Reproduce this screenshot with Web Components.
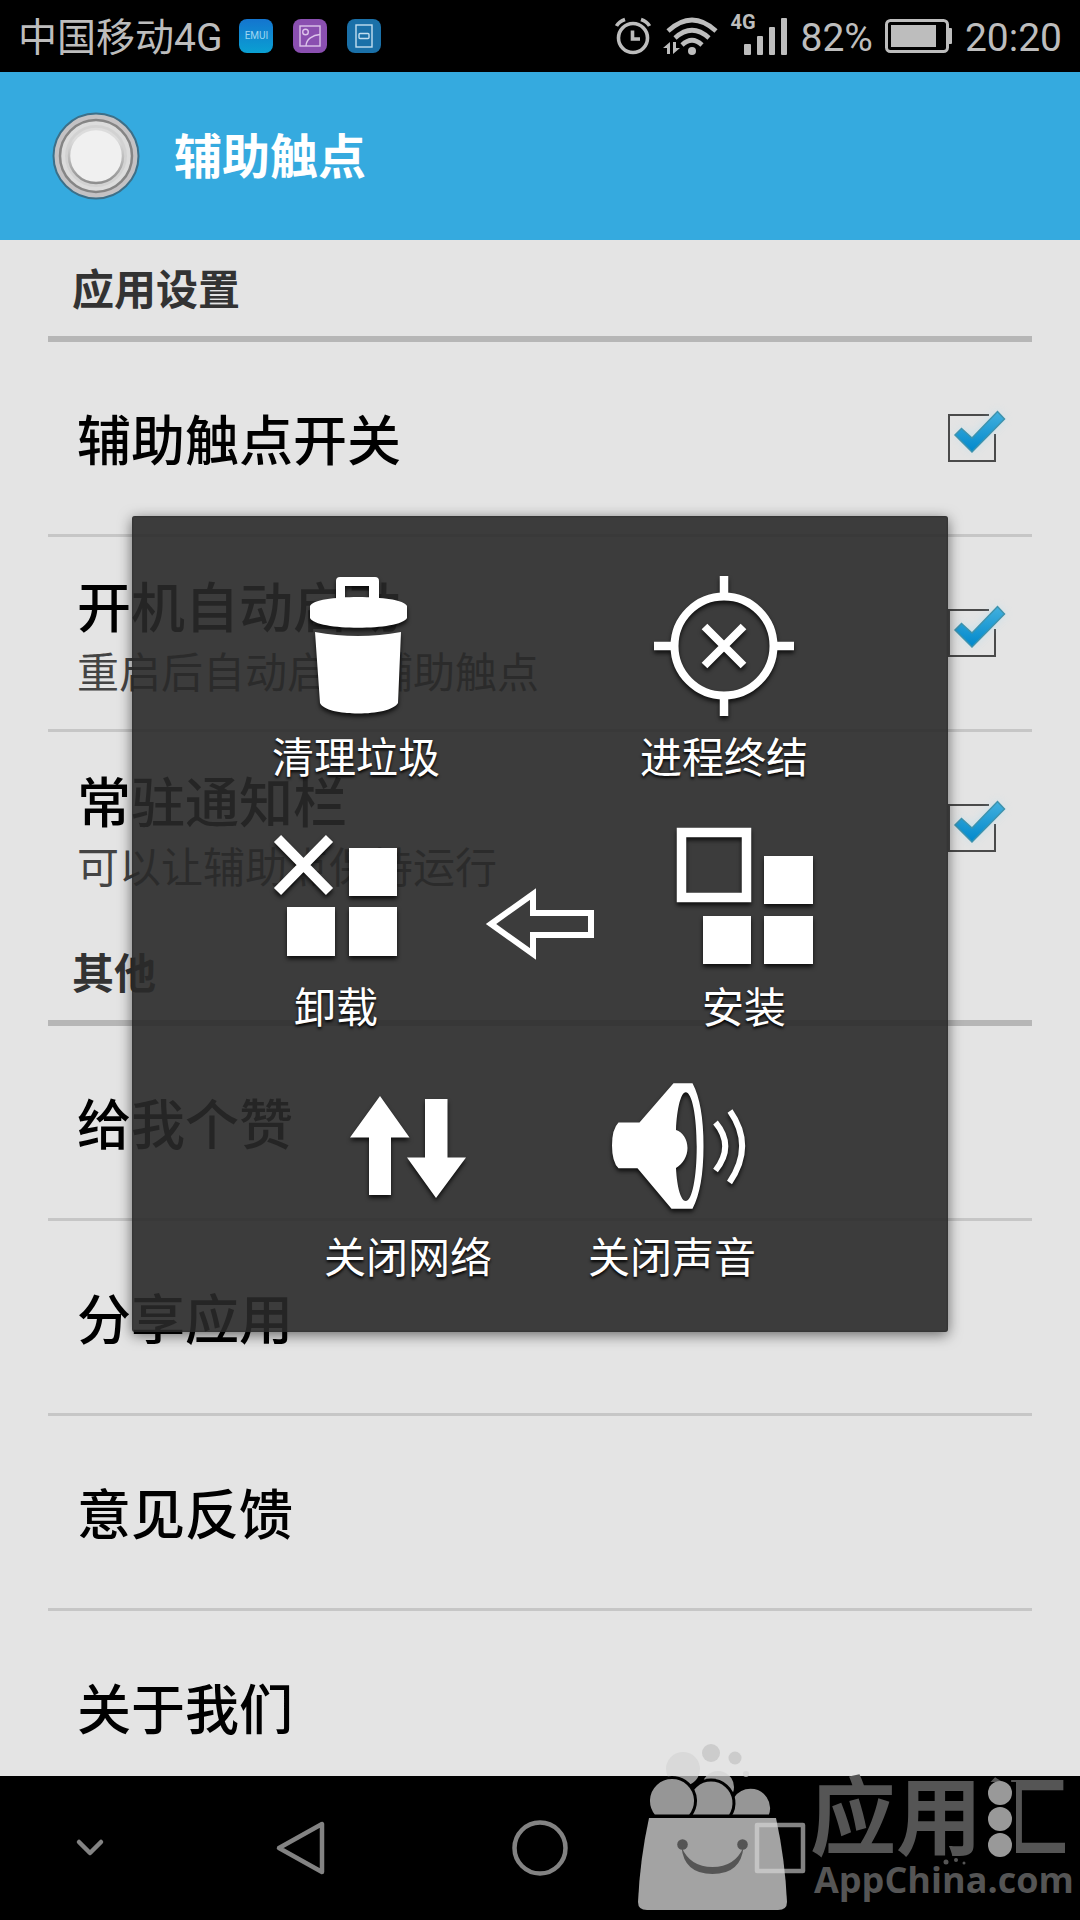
<!DOCTYPE html>
<html lang="zh-CN">
<head>
<meta charset="utf-8">
<meta name="viewport" content="width=device-width, initial-scale=1">
<title>辅助触点</title>
<style>
  body {
    margin: 0;
    background: #000;
    font-family: Roboto, "Noto Sans CJK SC", sans-serif;
  }
</style>
</head>
<body>
<touch-app></touch-app>

<script>
const define = (name, html, setup) => {
  customElements.define(name, class extends HTMLElement {
    constructor() {
      super();
      const root = this.attachShadow({ mode: 'open' });
      root.innerHTML = html;
    }
    connectedCallback() {
      if (setup && !this.ready) { this.ready = true; setup(this, this.shadowRoot); }
    }
  });
};

const resetButton = `
  button { appearance: none; border: 0; margin: 0; padding: 0; background: none;
           font: inherit; color: inherit; text-align: inherit; cursor: pointer; }
  svg { display: block; overflow: visible; }
`;

/* ---------- Status bar ---------- */
define('status-bar', `
<style>
  :host { display: flex; align-items: center; justify-content: space-between;
          height: 72px; padding: 0 18px; background: #000; color: #bdbdbd;
          font-size: 39px; line-height: 68px; white-space: nowrap; }
  div { display: flex; align-items: center; }
  svg { display: block; }
  .text { padding-top: 4px; }
  .apps { gap: 20px; margin-left: 17px; }
  .emui { width: 34px; height: 34px; border-radius: 8px; box-sizing: border-box;
          background: linear-gradient(#1475cf, #0aa0d2); color: #9fd6f2;
          font-size: 10px; line-height: 34px; text-align: center; }
  .right { gap: 12px; }
  .signal { position: relative; width: 58px; height: 38px; }
  .signal b { position: absolute; left: 0; top: -5px; font-size: 20px; line-height: 20px; font-weight: 700; }
</style>
<div>
  <span class="text">中国移动4G</span>
  <div class="apps">
    <span class="emui">EMUI</span>
    <svg width="34" height="34" viewBox="0 0 34 34" fill="none" stroke="#dcc4ea" stroke-width="1.4">
      <rect width="34" height="34" rx="8" fill="#8a4fb0" stroke="none"/>
      <rect x="7" y="7" width="20" height="20"/><circle cx="12.500" cy="13" r="2.800"/><path d="M13 27C13 20 20 16 27 15.500"/>
    </svg>
    <svg width="34" height="34" viewBox="0 0 34 34" fill="none" stroke="#c3dff0" stroke-width="1.4">
      <rect width="34" height="34" rx="8" fill="#1a70a8" stroke="none"/>
      <rect x="9" y="6" width="16" height="22"/><rect x="12" y="14.500" width="10" height="5" rx="1"/>
    </svg>
  </div>
</div>
<div class="right">
  <svg width="36" height="38" viewBox="0 0 36 38" fill="none" stroke="#bdbdbd">
    <circle cx="18" cy="21" r="14.500" stroke-width="3.600"/>
    <path d="M17.500 13.500V22H25" stroke-width="3.600"/>
    <path d="M1.500 9Q4 4.500 10 2.500M34.500 9Q32 4.500 26 2.500" stroke-width="3.600"/>
  </svg>
  <svg width="55" height="38" viewBox="0 0 55 38" fill="none" stroke="#bdbdbd" stroke-width="4.600">
    <path d="M5 14Q29 -8 53 14M12 21Q29 5.500 46 21M19 28Q29 18.500 39 28"/>
    <circle cx="29" cy="34" r="4" fill="#bdbdbd" stroke="none"/>
    <path d="M0 31L7 25V37H4V31ZM10 25V37L17 31H13V25Z" fill="#bdbdbd" stroke="none"/>
  </svg>
  <div class="signal">
    <b>4G</b>
    <svg width="58" height="38" viewBox="0 0 58 38" fill="#bdbdbd">
      <rect x="14" y="27" width="7" height="11" rx="1"/><rect x="27" y="19" width="6" height="19" rx="1"/>
      <rect x="39" y="10" width="6" height="28" rx="1"/><rect x="51" y="1" width="6" height="37" rx="1"/>
    </svg>
  </div>
  <span class="text">82%</span>
  <svg width="68" height="34" viewBox="0 0 68 34">
    <rect x="1.500" y="1.500" width="61" height="31" rx="4" fill="none" stroke="#bdbdbd" stroke-width="3"/>
    <rect x="6" y="6" width="45" height="22" fill="#bdbdbd"/><rect x="63" y="9" width="4" height="16" rx="1" fill="#bdbdbd"/>
  </svg>
  <span class="text">20:20</span>
</div>`);

/* ---------- Title bar ---------- */
define('title-bar', `
<style>
  :host { display: flex; align-items: center; gap: 34px; height: 168px; padding: 0 52px;
          background: #35aadf; color: #fff; }
  h1 { margin: 0; padding-top: 4px; font-size: 48px; line-height: 72px; font-weight: 700; }
</style>
<svg width="88" height="88" viewBox="0 0 88 88">
  <defs><linearGradient id="rim" x1="0" y1="0" x2="0" y2="1">
    <stop offset=".2" stop-color="#dcdcdc"/><stop offset="1" stop-color="#8f8f8f"/></linearGradient></defs>
  <circle cx="44" cy="44" r="42.500" fill="#c4c2c4" stroke="#3d6f88" stroke-width="2"/>
  <circle cx="44" cy="44" r="36" fill="#dcdcdc" stroke="#858585" stroke-width="2.500"/>
  <circle cx="44" cy="44" r="31" fill="#d2d2d2"/>
  <circle cx="44" cy="44" r="27" fill="#f0f0f0" stroke="url(#rim)" stroke-width="2.500"/>
</svg>
<h1><slot></slot></h1>`);

/* ---------- Settings list ---------- */
define('settings-section', `
<style>
  :host { display: block; margin: 0 48px; }
  h2 { margin: 0; padding: 6px 24px 0; height: 90px; border-bottom: 6px solid #b6b6b6; color: #333;
       font-size: 42px; line-height: 90px; font-weight: 700; }
</style>
<h2></h2><slot></slot>`, (el, root) => {
  root.querySelector('h2').textContent = el.getAttribute('heading');
});

const rowStyle = `
  :host { display: block; border-bottom: 3px solid #c6c6c6; }
  :host(:last-child) { border-bottom: 0; }
  .row { display: flex; align-items: center; justify-content: space-between; box-sizing: border-box;
         width: 100%; height: 192px; padding: 10px 36px 0 29px; color: #000; }
  .text { display: flex; flex-direction: column; }
  .title { font-size: 54px; line-height: 72px; font-weight: 500; }
  .note { font-size: 42px; line-height: 56px; color: #444; }
`;

define('setting-link', `
<style>${resetButton}${rowStyle}</style>
<button class="row" type="button"><span class="title"><slot></slot></span></button>`);

define('setting-toggle', `
<style>${resetButton}${rowStyle}
  .box { display: grid; align-self: stretch; align-items: center; margin-top: -10px; }
  .box > * { grid-area: 1 / 1; }
  input { appearance: none; margin: 0; width: 48px; height: 48px; }
  svg { pointer-events: none; }
  .tick { visibility: hidden; }
  input:checked + svg .tick { visibility: visible; }
</style>
<label class="row">
  <span class="text"><span class="title"><slot></slot></span></span>
  <span class="box">
    <input type="checkbox" checked>
    <svg width="48" height="48" viewBox="0 0 48 48">
      <defs><linearGradient id="g" x1="0" y1="0" x2="0" y2="1">
        <stop offset="0" stop-color="#43b0dd"/><stop offset="1" stop-color="#0088cc"/></linearGradient></defs>
      <path d="M41 1H1V47H47V20" fill="none" stroke="#4a4a4a" stroke-width="2"/>
      <g class="tick">
        <path d="M8 20L14 14L24 22L49 -3L57 5L24 38Z" fill="#a8dcf2" opacity=".5" style="filter:blur(4px)"/>
        <path d="M7 21L13.500 14.500L24 24L49.500 -2.500L56.500 5L24 38Z" fill="url(#g)" stroke="#3f93ad" stroke-width="1.500"/>
      </g>
    </svg>
  </span>
</label>`, (el, root) => {
  if (!el.hasAttribute('note')) return;
  const note = document.createElement('span');
  note.className = 'note';
  note.textContent = el.getAttribute('note');
  root.querySelector('.text').append(note);
});

/* ---------- Floating panel ---------- */
define('touch-panel', `
<style>
  :host { display: flex; flex-direction: column; gap: 40px; box-sizing: border-box;
          width: 816px; max-width: 100%; padding: 58px 0 48px; border-radius: 3px;
          background: rgba(41, 41, 41, .9);
          box-shadow: 0 3px 14px rgba(0, 0, 0, .55), inset 0 0 2px #222; }
</style>
<slot></slot>`);

define('panel-row', `
<style>
  :host { display: flex; justify-content: center; gap: var(--row-gap); }
</style>
<slot></slot>`);

const icons = {
  trash: `<path fill-rule="evenodd" d="M52 27V7Q52 3 56 3H91Q95 3 95 7V27ZM61 12V24H85V12Z"/>
    <path d="M26 32C30 20 118 20 123 32V44C116 57 32 57 26 44Z"/>
    <path d="M31 58Q74 66 117 58L114 129C106 143 42 143 36 129Z"/>`,
  target: `<circle cx="72" cy="72" r="49.500" fill="none" stroke="#fff" stroke-width="8"/>
    <path d="M72 2V22M72 122V142M2 72H22M122 72H142" stroke="#fff" stroke-width="8.500"/>
    <path d="M52.500 52.500L91.500 91.500M91.500 52.500L52.500 91.500" stroke="#fff" stroke-width="8"/>`,
  uninstall: `<path d="M13.500 14.500L65.500 67.500M65.500 14.500L13.500 67.500" stroke="#fff" stroke-width="10"/>
    <rect x="85" y="24" width="48" height="48"/><rect x="23" y="83" width="48" height="49"/><rect x="85" y="83" width="48" height="49"/>`,
  install: `<rect x="9.500" y="8.500" width="65" height="65" fill="none" stroke="#fff" stroke-width="9.500"/>
    <rect x="92" y="32" width="49" height="48"/><rect x="31" y="92" width="48" height="48"/><rect x="92" y="92" width="49" height="48"/>`,
  network: `<path d="M44 22L73.500 63.500H55V121H33V63.500H14Z"/><path d="M89 25H111.500V83.500H130L100 124L71 83.500H89Z"/>`,
  sound: `<path fill-rule="evenodd" d="M18.500 48.500H39.500L73.500 9.300H92.500Q103.500 30 103.500 72T92.500 134.700H71.500L37.500 94.300H18.500Q12 88 12 71.500T18.500 48.500Z
      M76 56C77 34 81 18.300 85.700 18.300C92 18.300 96.700 42 96.700 72.700S92 127 85.700 127C81 127 77 114 76 94C83 90 87.500 82 87.500 74S83 58 76 56Z"/>
    <path d="M115.500 48.500Q135 72 115.500 96.500M130 37Q154.500 72 129.500 108.500" fill="none" stroke="#fff" stroke-width="6"/>`
};

define('panel-item', `
<style>${resetButton}
  :host { display: block; width: 168px; }
  button { display: flex; flex-direction: column; align-items: center; gap: 16px; width: 100%;
           color: #fff; text-shadow: 0 2px 3px #000; }
  svg { filter: drop-shadow(0 3px 2px rgba(0, 0, 0, .75)); }
  span { font-size: 42px; line-height: 50px; white-space: nowrap; }
</style>
<button type="button">
  <svg width="144" height="144" viewBox="0 0 144 144" fill="#fff"></svg>
  <span><slot></slot></span>
</button>`, (el, root) => {
  root.querySelector('svg').innerHTML = icons[el.getAttribute('icon')];
});

define('panel-back', `
<style>${resetButton}
  :host { display: block; }
  button { display: flex; align-items: center; height: 200px; }
</style>
<button type="button" aria-label="返回">
  <svg width="108" height="72" viewBox="0 0 108 72" fill="none" stroke="#fff" stroke-width="6">
    <path d="M5 36L47 6V25H105V47H47V66Z"/>
  </svg>
</button>`);

/* ---------- Navigation bar ---------- */
define('nav-bar', `
<style>${resetButton}
  :host { display: grid; grid-template-columns: 3fr 4fr 4fr 4fr 3fr; height: 144px; background: #000; }
  button { display: grid; place-items: center; }
  svg { fill: none; stroke: #838383; stroke-width: 4.500; stroke-linejoin: round; stroke-linecap: round; }
</style>
<button type="button" aria-label="收起"><svg width="28" height="18" viewBox="0 0 28 18"><path d="M3 3L14 14L25 3"/></svg></button>
<button type="button" aria-label="后退"><svg width="48" height="56" viewBox="0 0 48 56"><path d="M46 4V52L3 28Z"/></svg></button>
<button type="button" aria-label="主页"><svg width="56" height="56" viewBox="0 0 56 56"><circle cx="28" cy="28" r="25.500"/></svg></button>
<button type="button" aria-label="最近任务"><svg width="50" height="50" viewBox="0 0 50 50"><rect x="2" y="2" width="46" height="46"/></svg></button>`);

/* ---------- Store mark ---------- */
define('store-mark', `
<style>
  :host { display: flex; align-items: flex-end; gap: 22px; color: #555; pointer-events: none; }
  svg { display: block; overflow: visible; }
  .words { position: relative; width: 262px; padding-bottom: 8px; white-space: nowrap; }
  .name { font-size: 86px; line-height: 88px; font-weight: 700; font-family: "Noto Sans CJK SC", sans-serif; }
  .site { padding-left: 4px; font-size: 36px; line-height: 48px; font-weight: 700; font-family: "Open Sans", sans-serif; }
  .dots { position: absolute; left: 0; top: 0; }
</style>
<svg width="152" height="168" viewBox="0 0 152 168">
  <g fill="#d4d4d4" fill-opacity=".7">
    <circle cx="47" cy="25" r="17"/><circle cx="110" cy="30" r="3"/>
    <circle cx="82" cy="43" r="16"/>
  </g>
  <g fill="#c6c6c6" fill-opacity=".8"><circle cx="75" cy="9" r="9"/><circle cx="99" cy="14" r="6.500"/></g>
  <g fill="#969696" stroke="#000" stroke-width="3">
    <path d="M95 72A21 21 0 1 1 134 72Z"/>
    <path d="M56 72A23 23 0 1 1 94 72Z"/>
    <path d="M18 72A23.500 23.500 0 1 1 54 72Z"/>
  </g>
  <path d="M13 74H140Q149 115 151 158Q151 166 142 166H11Q2 166 2 158Q4 115 13 74Z" fill="#dadada" fill-opacity=".75"/>
  <g fill="#555"><circle cx="46.500" cy="100.500" r="5.300"/><circle cx="106.500" cy="100.500" r="5.300"/>
    <path d="M45.500 103Q54 123 76.500 123T107.500 103Q105 130 76.500 130T45.500 103Z"/></g>
</svg>
<div class="words">
  <div class="name">应用汇</div>
  <div class="site">AppChina.com</div>
  <svg class="dots" width="262" height="144" viewBox="0 0 262 144">
    <rect x="173" y="14" width="33" height="75" fill="#000"/>
    <g fill="#999"><circle cx="190" cy="25" r="12"/><circle cx="190" cy="51" r="12"/><circle cx="190" cy="77" r="12"/></g>
    <g fill="#555"><circle cx="136" cy="94" r="2.500"/><circle cx="146" cy="92" r="2"/><circle cx="154" cy="95" r="1.500"/></g>
  </svg>
</div>`);

/* ---------- Screen ---------- */
define('touch-app', `
<style>
  :host { position: relative; display: flex; flex-direction: column; height: 100vh; overflow: hidden; }
  .stage { position: relative; flex: 1; min-height: 0; }
  main { height: 100%; overflow: hidden; background: #e4e4e4; }
  .overlay { position: absolute; inset: 0; display: grid; place-items: center; }
  .wide { --row-gap: 200px; }
  .middle { --row-gap: 66px; }
  .narrow { --row-gap: 96px; }
  store-mark { position: absolute; right: 8px; bottom: 8px; }
</style>
<status-bar></status-bar>
<div class="stage">
  <main>
    <title-bar>辅助触点</title-bar>
    <settings-section heading="应用设置">
      <setting-toggle>辅助触点开关</setting-toggle>
      <setting-toggle note="重启后自动启动辅助触点">开机自动启动</setting-toggle>
      <setting-toggle note="可以让辅助点保持运行">常驻通知栏</setting-toggle>
    </settings-section>
    <settings-section heading="其他">
      <setting-link>给我个赞</setting-link>
      <setting-link>分享应用</setting-link>
      <setting-link>意见反馈</setting-link>
      <setting-link>关于我们</setting-link>
    </settings-section>
  </main>
  <div class="overlay">
    <touch-panel>
      <panel-row class="wide">
        <panel-item icon="trash">清理垃圾</panel-item>
        <panel-item icon="target">进程终结</panel-item>
      </panel-row>
      <panel-row class="middle">
        <panel-item icon="uninstall">卸载</panel-item>
        <panel-back></panel-back>
        <panel-item icon="install">安装</panel-item>
      </panel-row>
      <panel-row class="narrow">
        <panel-item icon="network">关闭网络</panel-item>
        <panel-item icon="sound">关闭声音</panel-item>
      </panel-row>
    </touch-panel>
  </div>
</div>
<nav-bar></nav-bar>
<store-mark></store-mark>`);
</script>
</body>
</html>
